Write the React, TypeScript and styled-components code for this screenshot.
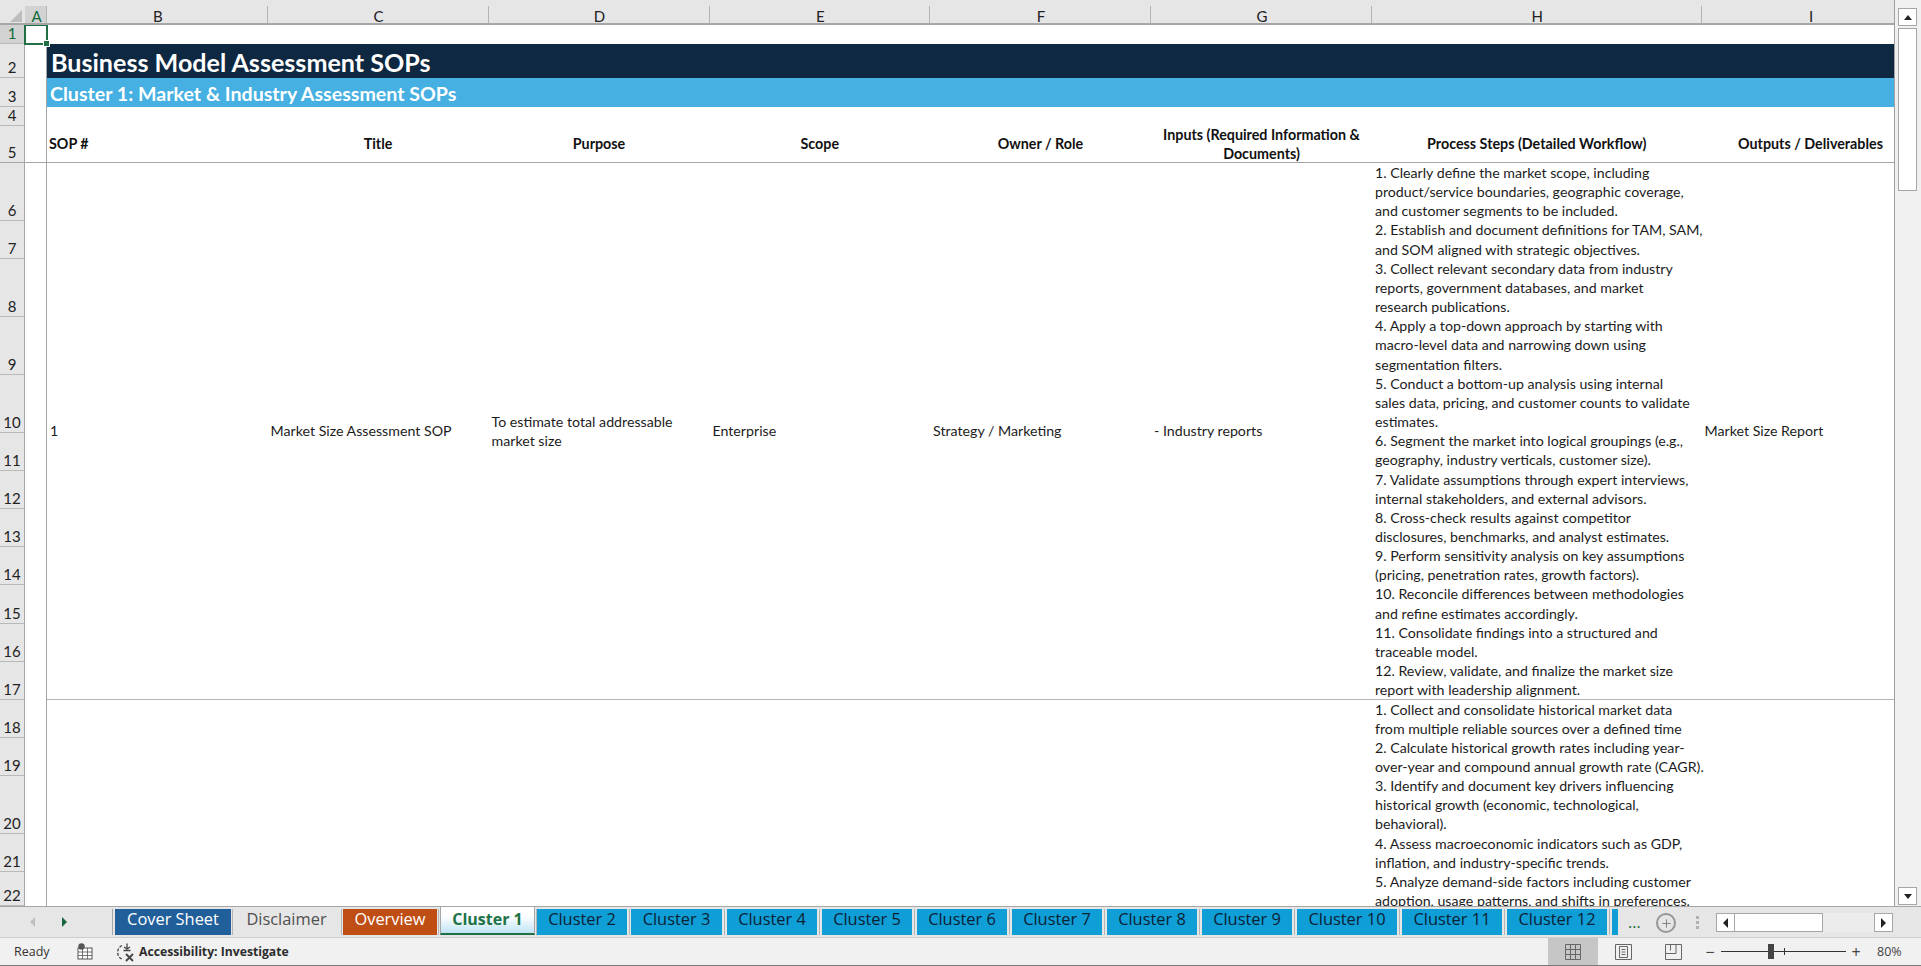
import React from 'react';
import styled, { createGlobalStyle, css } from 'styled-components';
import { Plus } from 'lucide-react';

const GlobalStyle = createGlobalStyle`
  html, body { margin: 0; padding: 0; background: #fff; overflow: hidden; }
  * { box-sizing: border-box; }
`;

const cellFont = `Lato, "Liberation Sans", Arial, sans-serif`;
const uiFont = `"Open Sans", "Noto Sans", sans-serif`;

const columns = [
  { name: 'B', width: 220.5 },
  { name: 'C', width: 221 },
  { name: 'D', width: 221 },
  { name: 'E', width: 220.5 },
  { name: 'F', width: 221 },
  { name: 'G', width: 221 },
  { name: 'H', width: 329.5 },
  { name: 'I', width: 218 }
];

// height of each row in the sheet, row 1 first
const rowHeights = [19, 34, 29, 18.5, 37.5, 57.5, 38.3, 58, 58, 58.2, 38.1, 38.1, 38.1, 38.2, 38.1, 38.1, 38.2, 38.3, 38.3, 57.5, 38.3, 33.5];

const stepsOne = [
  '1. Clearly define the market scope, including',
  'product/service boundaries, geographic coverage,',
  'and customer segments to be included.',
  '2. Establish and document definitions for TAM, SAM,',
  'and SOM aligned with strategic objectives.',
  '3. Collect relevant secondary data from industry',
  'reports, government databases, and market',
  'research publications.',
  '4. Apply a top-down approach by starting with',
  'macro-level data and narrowing down using',
  'segmentation filters.',
  '5. Conduct a bottom-up analysis using internal',
  'sales data, pricing, and customer counts to validate',
  'estimates.',
  '6. Segment the market into logical groupings (e.g.,',
  'geography, industry verticals, customer size).',
  '7. Validate assumptions through expert interviews,',
  'internal stakeholders, and external advisors.',
  '8. Cross-check results against competitor',
  'disclosures, benchmarks, and analyst estimates.',
  '9. Perform sensitivity analysis on key assumptions',
  '(pricing, penetration rates, growth factors).',
  '10. Reconcile differences between methodologies',
  'and refine estimates accordingly.',
  '11. Consolidate findings into a structured and',
  'traceable model.',
  '12. Review, validate, and finalize the market size',
  'report with leadership alignment.'
];

const stepsTwo = [
  '1. Collect and consolidate historical market data',
  'from multiple reliable sources over a defined time',
  '2. Calculate historical growth rates including year-',
  'over-year and compound annual growth rate (CAGR).',
  '3. Identify and document key drivers influencing',
  'historical growth (economic, technological,',
  'behavioral).',
  '4. Assess macroeconomic indicators such as GDP,',
  'inflation, and industry-specific trends.',
  '5. Analyze demand-side factors including customer',
  'adoption, usage patterns, and shifts in preferences.'
];

type TabKind = 'blue' | 'plain' | 'orange' | 'active' | 'cyan';

const tabs: { label: string; kind: TabKind; width: number; gap: number }[] = [
  { label: 'Cover Sheet', kind: 'blue', width: 116, gap: 2 },
  { label: 'Disclaimer', kind: 'plain', width: 107, gap: 3 },
  { label: 'Overview', kind: 'orange', width: 94, gap: 3 },
  { label: 'Cluster 1', kind: 'active', width: 95, gap: 2 },
  { label: 'Cluster 2', kind: 'cyan', width: 90, gap: 4 },
  { label: 'Cluster 3', kind: 'cyan', width: 91, gap: 5 },
  { label: 'Cluster 4', kind: 'cyan', width: 90, gap: 5 },
  { label: 'Cluster 5', kind: 'cyan', width: 90, gap: 5 },
  { label: 'Cluster 6', kind: 'cyan', width: 90, gap: 5 },
  { label: 'Cluster 7', kind: 'cyan', width: 90, gap: 5 },
  { label: 'Cluster 8', kind: 'cyan', width: 90, gap: 5 },
  { label: 'Cluster 9', kind: 'cyan', width: 90, gap: 5 },
  { label: 'Cluster 10', kind: 'cyan', width: 100, gap: 5 },
  { label: 'Cluster 11', kind: 'cyan', width: 100, gap: 5 },
  { label: 'Cluster 12', kind: 'cyan', width: 100, gap: 5 },
  { label: '', kind: 'cyan', width: 6, gap: 0 }
];

const Page = styled.div`
  width: 1921px;
  height: 966px;
  display: flex;
  flex-direction: column;
  overflow: hidden;
  background: #fff;
`;

const SheetArea = styled.div`
  height: 906px;
  flex: none;
  display: flex;
  background: #e6e6e6;
`;

const SheetFrame = styled.div`
  width: 1895px;
  flex: none;
  display: flex;
  flex-direction: column;
  overflow: hidden;
  border-right: 1px solid #a0a0a0;
`;

const ColumnBar = styled.div`
  height: 25px;
  flex: none;
  display: flex;
  background: #e6e6e6;
  border-bottom: 2px solid #a6a6a6;
`;

const Corner = styled.div`
  width: 25px;
  flex: none;
  position: relative;
  &::after {
    content: '';
    position: absolute;
    right: 3px;
    bottom: 1px;
    border-style: solid;
    border-width: 0 0 12px 12px;
    border-color: transparent transparent #bdbdbd transparent;
  }
`;

const ColumnHead = styled.div<{ $selected?: boolean; $width: number }>`
  width: ${p => p.$width}px;
  flex: none;
  display: flex;
  align-items: center;
  justify-content: center;
  margin-top: 6px;
  padding: 3px 0 0 2px;
  font: 15px/17px ${cellFont};
  color: #222;
  border-right: 1px solid #b4b4b4;
  ${p => p.$selected && css`
    background: #d2d2d2;
    color: #0f6b3c;
  `}
`;

const SheetBody = styled.div`
  flex: 1;
  min-height: 0;
  display: flex;
  overflow: hidden;
`;

const RowBar = styled.div`
  width: 25px;
  flex: none;
  background: #e6e6e6;
  border-right: 1px solid #a6a6a6;
`;

const RowHead = styled.div<{ $selected?: boolean; $height: number; $strong?: boolean }>`
  height: ${p => p.$height}px;
  display: flex;
  align-items: flex-end;
  justify-content: center;
  font: 15px/19px ${cellFont};
  color: #222;
  border-bottom: 1px solid ${p => (p.$strong ? '#a6a6a6' : '#b9b9b9')};
  ${p => p.$selected && css`
    background: #d2d2d2;
    color: #0f6b3c;
  `}
`;

const Grid = styled.div`
  flex: none;
  display: grid;
  grid-template-columns: 22px ${columns.map(c => `${c.width}px`).join(' ')};
  grid-auto-rows: min-content;
  align-content: start;
  background: #fff;
  position: relative;
`;

const SelectedCell = styled.div`
  position: absolute;
  left: -1px;
  top: -1px;
  width: 24px;
  height: 21px;
  border: 2px solid #1f7145;
  pointer-events: none;
  &::after {
    content: '';
    position: absolute;
    right: -4px;
    bottom: -4px;
    width: 5px;
    height: 5px;
    background: #1f7145;
    border: 1px solid #fff;
  }
`;

const Spacer = styled.div<{ $height: number; $from?: number }>`
  grid-column: ${p => p.$from ?? 1} / -1;
  height: ${p => p.$height}px;
`;

const MarginCell = styled.div<{ $height?: number; $line?: boolean }>`
  ${p => p.$height && `height: ${p.$height}px;`}
  border-right: 1px solid #a6a6a6;
  ${p => p.$line && 'border-bottom: 1px solid #a6a6a6;'}
`;

const TitleBand = styled.div`
  grid-column: 2 / -1;
  height: 34px;
  background: #0e2841;
  color: #fff;
  font: 700 25.1px/36px ${cellFont};
  padding-left: 4px;
  white-space: nowrap;
`;

const SubtitleBand = styled.div`
  grid-column: 2 / -1;
  height: 29px;
  background: #45b0e1;
  color: #fff;
  font: 700 19.6px/32px ${cellFont};
  padding-left: 3px;
  white-space: nowrap;
`;

const HeaderCell = styled.div<{ $left?: boolean }>`
  height: 37.5px;
  display: flex;
  align-items: center;
  justify-content: ${p => (p.$left ? 'flex-start' : 'center')};
  text-align: ${p => (p.$left ? 'left' : 'center')};
  padding: 0 ${p => (p.$left ? '2px' : '3px')};
  font: 700 14.3px/19px ${cellFont};
  color: #111;
  white-space: nowrap;
  border-bottom: 1px solid #a6a6a6;
`;

const DataRow = styled.div<{ $height: number; $open?: boolean }>`
  grid-column: 1 / -1;
  display: grid;
  grid-template-columns: subgrid;
  grid-template-rows: minmax(0, 1fr);
  height: ${p => p.$height}px;
  overflow: hidden;
  ${p => !p.$open && css`
    & > div:not(:first-child) { border-bottom: 1px solid #b5b5b5; }
  `}
`;

const DataCell = styled.div<{ $top?: boolean }>`
  display: flex;
  flex-direction: column;
  justify-content: ${p => (p.$top ? 'flex-start' : 'center')};
  padding: 0 3px;
  font: 14.2px/19.15px ${cellFont};
  color: #1c1c1c;
  white-space: nowrap;
`;

const Scrollbar = styled.div`
  flex: 1;
  display: flex;
  flex-direction: column;
  padding: 8px 4px 1px 3px;
  background: #f0f0f0;
`;

const ScrollButton = styled.div<{ $down?: boolean }>`
  flex: none;
  height: 18px;
  background: #fff;
  border: 1px solid #a6a6a6;
  display: flex;
  align-items: center;
  justify-content: center;
  &::after {
    content: '';
    border-style: solid;
    border-color: transparent;
    border-width: ${p => (p.$down ? '5px 4.5px 0' : '0 4.5px 5px')};
    ${p => (p.$down ? 'border-top-color: #222;' : 'border-bottom-color: #222;')}
  }
`;

const ScrollThumb = styled.div`
  flex: none;
  height: 163px;
  margin-top: 2px;
  background: #fff;
  border: 1px solid #a6a6a6;
`;

const ScrollTrack = styled.div`
  flex: 1;
`;

const TabStrip = styled.div`
  height: 32px;
  flex: none;
  display: flex;
  align-items: flex-start;
  background: #e6e6e6;
  border-top: 1px solid #a6a6a6;
  border-bottom: 1px solid #cdcdcd;
  padding-top: 2px;
`;

const TabNav = styled.div`
  width: 113px;
  height: 26px;
  flex: none;
  display: flex;
  align-items: center;
  padding-left: 30px;
  gap: 27px;
  border-right: 1px solid #a6a6a6;
  margin-right: 2px;
`;

const NavArrow = styled.div<{ $on?: boolean }>`
  border-style: solid;
  border-color: transparent;
  ${p => p.$on
    ? 'border-width: 5px 0 5px 5px; border-left-color: #17683d;'
    : 'border-width: 5px 5px 5px 0; border-right-color: #bfbfbf;'}
`;

const Tab = styled.div<{ $kind: TabKind; $width: number }>`
  width: ${p => p.$width}px;
  height: 26px;
  flex: none;
  display: flex;
  align-items: flex-start;
  justify-content: center;
  font: 16.4px/20px ${uiFont};
  white-space: nowrap;
  ${p => p.$kind === 'blue' && css`background: #215f9a; color: #fff;`}
  ${p => p.$kind === 'plain' && css`background: #e6e6e6; color: #505050;`}
  ${p => p.$kind === 'orange' && css`background: #bf4e14; color: #fff;`}
  ${p => p.$kind === 'cyan' && css`background: #0f9ed5; color: #0b2235;`}
  ${p => p.$kind === 'active' && css`
    height: 28px;
    margin-top: -2px;
    padding-top: 2px;
    background: linear-gradient(#ffffff 35%, #bfe3f4);
    color: #217346;
    font-weight: 700;
    font-size: 16px;
    border-left: 1px solid #a6a6a6;
    border-right: 1px solid #a6a6a6;
    border-bottom: 2px solid #1f7145;
  `}
`;

const TabDivider = styled.div<{ $width: number }>`
  width: ${p => p.$width}px;
  height: 26px;
  flex: none;
  display: flex;
  justify-content: center;
  &::after {
    content: '';
    width: 1px;
    height: 100%;
    background: #b4b4b4;
  }
`;

const TabDots = styled.div`
  width: 20px;
  flex: none;
  margin-left: 10px;
  font: 16px/26px ${uiFont};
  color: #17683d;
`;

const AddSheet = styled.div`
  width: 20px;
  height: 20px;
  flex: none;
  margin: 4px 0 0 8px;
  border: 2px solid #969696;
  border-radius: 50%;
  display: flex;
  align-items: center;
  justify-content: center;
  color: #757575;
`;

const StripGrip = styled.div`
  width: 3px;
  height: 13px;
  flex: none;
  margin: 7px 17px 0 20px;
  background: repeating-linear-gradient(#b0b0b0 0 3px, transparent 3px 5px);
`;

const HScroll = styled.div`
  width: 177px;
  height: 19px;
  flex: none;
  margin-top: 4px;
  display: flex;
  background: #ececec;
`;

const HButton = styled.div<{ $right?: boolean }>`
  width: 19px;
  flex: none;
  background: #fff;
  border: 1px solid #a6a6a6;
  display: flex;
  align-items: center;
  justify-content: center;
  &::after {
    content: '';
    border-style: solid;
    border-color: transparent;
    border-width: ${p => (p.$right ? '5px 0 5px 5px' : '5px 5px 5px 0')};
    ${p => (p.$right ? 'border-left-color: #222;' : 'border-right-color: #222;')}
  }
`;

const HThumb = styled.div`
  width: 88px;
  flex: none;
  background: #fff;
  border: 1px solid #a6a6a6;
  border-left: none;
`;

const HTrack = styled.div`
  flex: 1;
`;

const StatusBar = styled.div`
  flex: 1;
  display: flex;
  align-items: center;
  padding-right: 19px;
  background: #f1f1f1;
  border-bottom: 1px solid #7a7a7a;
  font: 12.5px ${uiFont};
  color: #333;
`;

const Ready = styled.span`
  margin-left: 14px;
  width: 63px;
`;

const StatusIcon = styled.span`
  display: flex;
  margin-right: 22px;
`;

const Accessibility = styled.span`
  margin-left: -20px;
  font-weight: 700;
  font-size: 12.2px;
  color: #2c2c2c;
`;

const StatusFill = styled.div`
  flex: 1;
`;

const ViewButton = styled.div<{ $selected?: boolean }>`
  width: 50px;
  align-self: stretch;
  flex: none;
  display: flex;
  align-items: center;
  justify-content: center;
  ${p => p.$selected && 'background: #c6c6c6;'}
`;

const Zoom = styled.div`
  display: flex;
  align-items: center;
  flex: none;
  margin-left: 7px;
  font-size: 12.5px;
`;

const ZoomSlider = styled.div`
  width: 125px;
  height: 1px;
  margin: 0 5px 0 6px;
  background: #333;
  position: relative;
`;

const ZoomThumb = styled.div`
  position: absolute;
  left: 47px;
  top: -7px;
  width: 6px;
  height: 15px;
  background: #444;
`;

const ZoomTick = styled.div`
  position: absolute;
  left: 63px;
  top: -3px;
  width: 1px;
  height: 7px;
  background: #333;
`;

const ZoomLabel = styled.span`
  margin-left: 16px;
  width: 25px;
  white-space: nowrap;
  color: #444;
`;

const ZoomSign = styled.span`
  width: 10px;
  font-size: 16px;
  line-height: 16px;
  text-align: center;
  color: #444;
`;

const Lines: React.FC<{ lines: string[] }> = ({ lines }) => (
  <>
    {lines.map(line => (
      <div key={line}>{line}</div>
    ))}
  </>
);

export default function App() {
  return (
    <Page>
      <GlobalStyle />
      <SheetArea>
        <SheetFrame>
          <ColumnBar>
            <Corner />
            <ColumnHead $selected $width={22}>A</ColumnHead>
            {columns.map(c => (
              <ColumnHead key={c.name} $width={c.width}>{c.name}</ColumnHead>
            ))}
          </ColumnBar>
          <SheetBody>
            <RowBar>
              {rowHeights.map((h, i) => (
                <RowHead key={i} $height={h} $selected={i === 0} $strong={i === 4}>{i + 1}</RowHead>
              ))}
            </RowBar>
            <Grid>
              <SelectedCell />
              <Spacer $height={rowHeights[0]} />
              <MarginCell $height={34} />
              <TitleBand>Business Model Assessment SOPs</TitleBand>
              <MarginCell $height={29} />
              <SubtitleBand>Cluster 1: Market &amp; Industry Assessment SOPs</SubtitleBand>
              <MarginCell $height={18.5} />
              <Spacer $height={18.5} $from={2} />
              <MarginCell $line />
              <HeaderCell $left>SOP #</HeaderCell>
              <HeaderCell>Title</HeaderCell>
              <HeaderCell>Purpose</HeaderCell>
              <HeaderCell>Scope</HeaderCell>
              <HeaderCell>Owner / Role</HeaderCell>
              <HeaderCell>
                <span>Inputs (Required Information &amp;<br />Documents)</span>
              </HeaderCell>
              <HeaderCell>Process Steps (Detailed Workflow)</HeaderCell>
              <HeaderCell>Outputs / Deliverables</HeaderCell>
              <DataRow $height={536.5}>
                <MarginCell />
                <DataCell>1</DataCell>
                <DataCell>Market Size Assessment SOP</DataCell>
                <DataCell><Lines lines={['To estimate total addressable', 'market size']} /></DataCell>
                <DataCell>Enterprise</DataCell>
                <DataCell>Strategy / Marketing</DataCell>
                <DataCell>- Industry reports</DataCell>
                <DataCell $top><Lines lines={stepsOne} /></DataCell>
                <DataCell>Market Size Report</DataCell>
              </DataRow>
              <DataRow $height={207} $open>
                <MarginCell />
                <DataCell />
                <DataCell />
                <DataCell />
                <DataCell />
                <DataCell />
                <DataCell />
                <DataCell $top><Lines lines={stepsTwo} /></DataCell>
                <DataCell />
              </DataRow>
            </Grid>
          </SheetBody>
        </SheetFrame>
        <Scrollbar>
          <ScrollButton />
          <ScrollThumb />
          <ScrollTrack />
          <ScrollButton $down />
        </Scrollbar>
      </SheetArea>
      <TabStrip>
        <TabNav>
          <NavArrow />
          <NavArrow $on />
        </TabNav>
        {tabs.map((t, i) => (
          <React.Fragment key={i}>
            <Tab $kind={t.kind} $width={t.width}>{t.label}</Tab>
            {t.gap > 0 && <TabDivider $width={t.gap} />}
          </React.Fragment>
        ))}
        <TabDots>...</TabDots>
        <AddSheet><Plus size={13} strokeWidth={1.6} /></AddSheet>
        <StripGrip />
        <HScroll>
          <HButton />
          <HThumb />
          <HTrack />
          <HButton $right />
        </HScroll>
      </TabStrip>
      <StatusBar>
        <Ready>Ready</Ready>
        <StatusIcon>
          <svg width="16" height="17" viewBox="0 0 16 17" fill="none">
            <rect x="1" y="5" width="14" height="11" fill="#fff" stroke="#555" />
            <circle cx="4.5" cy="3.5" r="3.2" fill="#555" />
            <path d="M1 9h14M1 12.5h14M5.5 5v11M10.5 5v11" stroke="#555" strokeWidth="0.8" />
          </svg>
        </StatusIcon>
        <StatusIcon>
          <svg width="22" height="20" viewBox="0 0 22 20" fill="none" stroke="#444" strokeWidth="1.3">
            <path d="M7 3.5a7.5 7.5 0 0 0 1 14" strokeDasharray="3 1.5" />
            <path d="M12 1.5v5M9 5l3 2 3-2M8.5 8.5h7" />
            <path d="M11 12l7 7M18 12l-7 7" strokeWidth="1.8" />
          </svg>
        </StatusIcon>
        <Accessibility>Accessibility: Investigate</Accessibility>
        <StatusFill />
        <ViewButton $selected>
          <svg width="16" height="16" viewBox="0 0 16 16" fill="none" stroke="#666" strokeWidth="1">
            <path d="M.5.5h15v15H.5zM.5 5.5h15M.5 10.5h15M5.5 .5v15M10.5 .5v15" />
          </svg>
        </ViewButton>
        <ViewButton>
          <svg width="17" height="16" viewBox="0 0 17 16" fill="none" stroke="#666" strokeWidth="1">
            <path d="M.5.5h16v15H.5zM4.5 2.5h8v11h-8zM6.5 5.5h4M6.5 8h4M6.5 10.5h4" />
          </svg>
        </ViewButton>
        <ViewButton>
          <svg width="17" height="16" viewBox="0 0 17 16" fill="none" stroke="#666" strokeWidth="1">
            <path d="M.5.5h16v15H.5zM.5 9.5h10.5V.5M5.5 .5v6" />
          </svg>
        </ViewButton>
        <Zoom>
          <ZoomSign>−</ZoomSign>
          <ZoomSlider>
            <ZoomThumb />
            <ZoomTick />
          </ZoomSlider>
          <ZoomSign>+</ZoomSign>
          <ZoomLabel>80%</ZoomLabel>
        </Zoom>
      </StatusBar>
    </Page>
  );
}
